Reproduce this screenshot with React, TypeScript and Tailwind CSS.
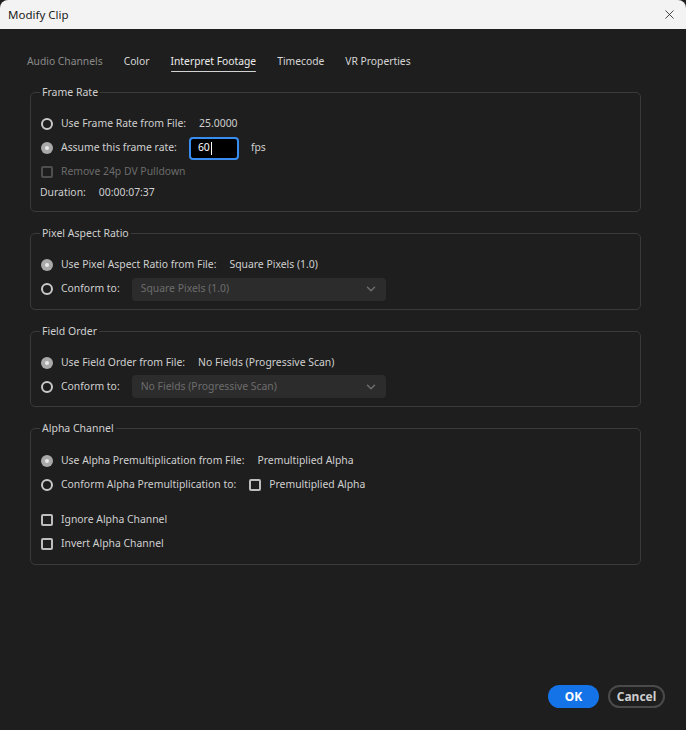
import { ChevronDown, X } from "lucide-react";

const font = { fontFamily: '"Noto Sans", "Open Sans", sans-serif' };

const Radio = ({ on }: { on?: boolean }) =>
  on ? (
    <span className="flex h-3 w-3 shrink-0 items-center justify-center rounded-full bg-[#a9a9a9]">
      <span className="h-1 w-1 rounded-full bg-[#e8e8e8]" />
    </span>
  ) : (
    <span className="h-3 w-3 shrink-0 rounded-full border-2 border-[#c9c9c9] bg-[#1e1e1e]" />
  );

const Check = ({ disabled, className }: { disabled?: boolean; className?: string }) => (
  <span
    className={
      "block h-3 w-3 shrink-0 rounded-[2px] border-2 " +
      (disabled ? "border-[#4e4e4e] " : "border-[#bdbdbd] ") +
      (className ?? "")
    }
  />
);

const Group = ({
  title,
  children,
  className,
}: {
  title: string;
  children: React.ReactNode;
  className?: string;
}) => (
  <fieldset
    className={
      "mx-[30px] w-[611px] rounded-[5px] border border-[#3a3a3a] px-[9px] " +
      (className ?? "")
    }
  >
    <legend className="px-[2px] text-[10.5px] leading-[14px] text-[#cfcfcf]">
      {title}
    </legend>
    {children}
  </fieldset>
);

const Select = ({ value }: { value: string }) => (
  <div className="ml-[4px] flex h-[23px] w-[254px] items-center justify-between rounded-[4px] bg-[#2c2c2c] pl-[9px] pr-[8px] text-[#6c6c6c]">
    <span>{value}</span>
    <ChevronDown size={14} strokeWidth={2.5} className="text-[#6e6e6e]" />
  </div>
);

export default function App() {
  const tabs = ["Audio Channels", "Color", "Interpret Footage", "Timecode", "VR Properties"];
  return (
    <div
      className="flex h-[730px] w-[686px] flex-col overflow-hidden bg-[#1e1e1e] text-[10.4px] text-[#d0d0d0]"
      style={font}
    >
      {/* title bar */}
      <div className="flex h-[29px] shrink-0 items-center justify-between rounded-t-[8px] bg-[#f3f3f3] pl-[8px] pr-[9px]">
        <span className="text-[11.5px] text-[#1b1b1b]">Modify Clip</span>
        <X size={15} strokeWidth={1.3} className="text-[#202020]" />
      </div>

      {/* tabs */}
      <div className="mt-[23px] flex gap-[21px] pl-[27px] text-[10.3px]">
        {tabs.map((t, i) => (
          <div
            key={t}
            className={
              "flex h-[20px] flex-col justify-start leading-[18px] " +
              (i === 0 ? "text-[#8a8a8a]" : i === 2 ? "text-[#ececec]" : "text-[#d6d6d6]")
            }
          >
            <span>{t}</span>
            {i === 2 && <span className="mt-px h-[2px] rounded-full bg-[#d2d2d2]" />}
          </div>
        ))}
      </div>

      {/* Frame Rate */}
      <Group title="Frame Rate" className="mt-[13px] pb-[9px] pt-[13px]">
        <div className="flex h-6 items-center gap-[8px] pl-[1px]">
          <Radio />
          <span>Use Frame Rate from File:</span>
          <span className="ml-[5px]">25.0000</span>
        </div>
        <div className="flex h-6 items-center gap-[8px] pl-[1px]">
          <Radio on />
          <span>Assume this frame rate:</span>
          <div className="ml-[4px] flex h-[23px] w-[50px] items-center rounded-[4px] border-2 border-[#378ef0] bg-black pl-[7px] text-white">
            60<span className="ml-[1px] h-[13px] w-px bg-white" />
          </div>
          <span className="ml-[4px]">fps</span>
        </div>
        <div className="flex h-6 items-center gap-[8px] pl-[1px] text-[#6c6c6c]">
          <Check disabled />
          <span>Remove 24p DV Pulldown</span>
        </div>
        <div className="flex h-[18px] items-center gap-[13px]">
          <span>Duration:</span>
          <span>00:00:07:37</span>
        </div>
      </Group>

      {/* Pixel Aspect Ratio */}
      <Group title="Pixel Aspect Ratio" className="mt-[14px] pb-[8px] pt-[13px]">
        <div className="flex h-6 items-center gap-[8px] pl-[1px]">
          <Radio on />
          <span>Use Pixel Aspect Ratio from File:</span>
          <span className="ml-[5px]">Square Pixels (1.0)</span>
        </div>
        <div className="flex h-6 items-center gap-[8px] pl-[1px]">
          <Radio />
          <span>Conform to:</span>
          <Select value="Square Pixels (1.0)" />
        </div>
      </Group>

      {/* Field Order */}
      <Group title="Field Order" className="mt-[14px] pb-[8px] pt-[13px]">
        <div className="flex h-6 items-center gap-[8px] pl-[1px]">
          <Radio on />
          <span>Use Field Order from File:</span>
          <span className="ml-[5px]">No Fields (Progressive Scan)</span>
        </div>
        <div className="flex h-[23px] items-center gap-[8px] pl-[1px]">
          <Radio />
          <span>Conform to:</span>
          <Select value="No Fields (Progressive Scan)" />
        </div>
      </Group>

      {/* Alpha Channel */}
      <Group title="Alpha Channel" className="mt-[14px] pb-[8px] pt-[14px]">
        <div className="flex h-6 items-center gap-[8px] pl-[1px]">
          <Radio on />
          <span>Use Alpha Premultiplication from File:</span>
          <span className="ml-[5px]">Premultiplied Alpha</span>
        </div>
        <div className="flex h-[23px] items-center gap-[8px] pl-[1px]">
          <Radio />
          <span>Conform Alpha Premultiplication to:</span>
          <Check className="ml-[5px]" />
          <span>Premultiplied Alpha</span>
        </div>
        <div className="mt-[12px] flex h-6 items-center gap-[8px] pl-[1px]">
          <Check />
          <span>Ignore Alpha Channel</span>
        </div>
        <div className="flex h-6 items-center gap-[8px] pl-[1px]">
          <Check />
          <span>Invert Alpha Channel</span>
        </div>
      </Group>

      {/* buttons */}
      <div className="mt-auto mb-[22px] flex justify-end gap-[9px] pr-[21px]">
        <button className="h-[23px] w-[51px] rounded-full bg-[#1473e6] text-[12px] font-bold text-white">
          OK
        </button>
        <button className="h-[23px] w-[57px] rounded-full border-2 border-[#4a4a4a] text-[12px] font-bold text-[#cdcdcd]">
          Cancel
        </button>
      </div>
    </div>
  );
}
